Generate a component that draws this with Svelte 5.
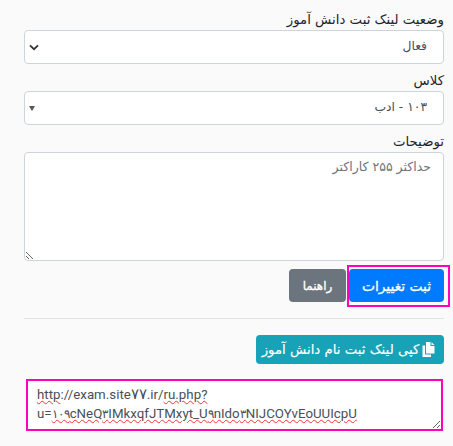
<script>
  let status = $state('فعال');
  let klass = $state('۱۰۳ - ادب');
</script>

<main class="form" dir="rtl">
  <div class="group">
    <label for="status">وضعیت لینک ثبت دانش آموز</label>
    <div class="select-wrap">
      <select id="status" bind:value={status}>
        <option>فعال</option>
        <option>غیرفعال</option>
      </select>
      <svg class="chev" width="10" height="7" viewBox="0 0 10 7" aria-hidden="true">
        <path d="M1 1.4 5 5.2 9 1.4" fill="none" stroke="#333" stroke-width="1.8"/>
      </svg>
    </div>
  </div>

  <div class="group">
    <label for="klass">کلاس</label>
    <div class="select-wrap">
      <select id="klass" bind:value={klass}>
        <option>۱۰۳ - ادب</option>
      </select>
      <svg class="caret" width="6" height="5" viewBox="0 0 6 5" aria-hidden="true">
        <path d="M0 0H6L3 5Z" fill="#555"/>
      </svg>
    </div>
  </div>

  <div class="group">
    <label for="desc">توضیحات</label>
    <textarea id="desc" placeholder="حداکثر ۲۵۵ کاراکتر"></textarea>
  </div>

  <div class="actions">
    <button class="btn primary">ثبت تغییرات</button>
    <button class="btn secondary">راهنما</button>
    <span class="highlight" aria-hidden="true"></span>
  </div>

  <hr />

  <div class="copy-row">
    <button class="btn info">
      <svg width="13" height="15" viewBox="0 0 13 15" aria-hidden="true">
        <path d="M4 0H8.5V4H12.5V11.5H4Z" fill="#fff"/>
        <path d="M9.5 0.2 12.5 3H9.5Z" fill="#fff"/>
        <path d="M0.5 3.5H3V12.5H9V15H0.5Z" fill="#fff"/>
      </svg>
      <span>کپی لینک ثبت نام دانش آموز</span>
    </button>
  </div>

  <div class="link-box" dir="ltr">
    <span class="sq">http</span>://exam.site<span class="fa big">۷۷</span>.ir/<span class="sq">ru.php?</span><br />
    u=<span class="sq"><span class="fa">۱۰۹</span>cNeQ<span class="fa">۳</span>IMkxqfJTMxyt_U<span class="fa">۹</span>nIdo<span class="fa">۳</span>NIJCOYvEoUUIcpU</span>
  </div>
</main>

<style>
  :global(body) {
    margin: 0;
    background: #fafafa;
    font-family: "DejaVu Sans", sans-serif;
    color: #212529;
  }
  .form {
    box-sizing: border-box;
    width: 453px;
    height: 446px;
    padding: 11px 9px 0 24px;
    overflow: hidden;
  }
  .group {
    display: flex;
    flex-direction: column;
    margin-bottom: 8px;
  }
  label {
    font-size: 13.3px;
    line-height: 18px;
    margin-bottom: 1px;
  }
  .select-wrap {
    position: relative;
  }
  select {
    appearance: none;
    display: block;
    box-sizing: border-box;
    width: 100%;
    height: 34px;
    padding: 0 16px 3px 24px;
    background: #fff;
    border: 1px solid #ced4da;
    border-radius: 4px;
    font: 12.3px "DejaVu Sans", sans-serif;
    color: #495057;
  }
  .chev {
    position: absolute;
    left: 5px;
    top: 14px;
    pointer-events: none;
  }
  .caret {
    position: absolute;
    left: 5px;
    top: 15px;
    pointer-events: none;
  }
  textarea {
    display: block;
    box-sizing: border-box;
    width: 100%;
    height: 109px;
    padding: 5px 12px;
    background: #fff;
    border: 1px solid #ced4da;
    border-radius: 4px;
    font: 12.5px/1.5 "DejaVu Sans", sans-serif;
    color: #495057;
  }
  textarea::placeholder {
    color: #6c757d;
    opacity: 1;
  }
  .actions {
    position: relative;
    display: flex;
    gap: 3px;
  }
  .btn {
    border: 1px solid transparent;
    border-radius: 4px;
    color: #fff;
    font: 12px "DejaVu Sans", sans-serif;
    box-sizing: border-box;
  }
  .primary {
    width: 95px;
    height: 33px;
    background: #007bff;
    font-size: 13.8px;
    -webkit-text-stroke: 0.3px #fff;
    padding: 0;
  }
  .secondary {
    width: 57px;
    height: 33px;
    background: #6c757d;
    -webkit-text-stroke: 0.3px #fff;
    padding: 0;
  }
  .highlight {
    position: absolute;
    right: -6px;
    top: -4px;
    width: 103px;
    height: 42px;
    box-sizing: border-box;
    border: 2px solid #ff00bf;
    pointer-events: none;
  }
  hr {
    border: 0;
    border-top: 1px solid #e3e3e3;
    margin: 16px 0;
  }
  .copy-row {
    display: flex;
    justify-content: flex-start;
  }
  .info {
    display: flex;
    align-items: center;
    justify-content: center;
    gap: 3px;
    width: 188px;
    height: 29px;
    background: #17a2b8;
    padding: 0 3px 0 0;
    font-size: 13.3px;
    -webkit-text-stroke: 0.15px #fff;
  }
  .link-box {
    box-sizing: border-box;
    height: 52px;
    width: 417px;
    margin: 15px 1px 0 0;
    padding: 5px 9px;
    background: #fff;
    border: 2px solid #ff00bf;
    font: 13.3px/18.5px Roboto, sans-serif;
    color: #495057;
    overflow: auto;
    resize: vertical;
    white-space: nowrap;
  }
  .fa {
    font-size: 12px;
    letter-spacing: -0.3px;
  }
  .big {
    font-size: 14.5px;
    letter-spacing: 0;
  }
  .sq {
    text-decoration: underline wavy #e33;
    text-decoration-thickness: 1px;
    text-underline-offset: 1px;
  }
</style>
